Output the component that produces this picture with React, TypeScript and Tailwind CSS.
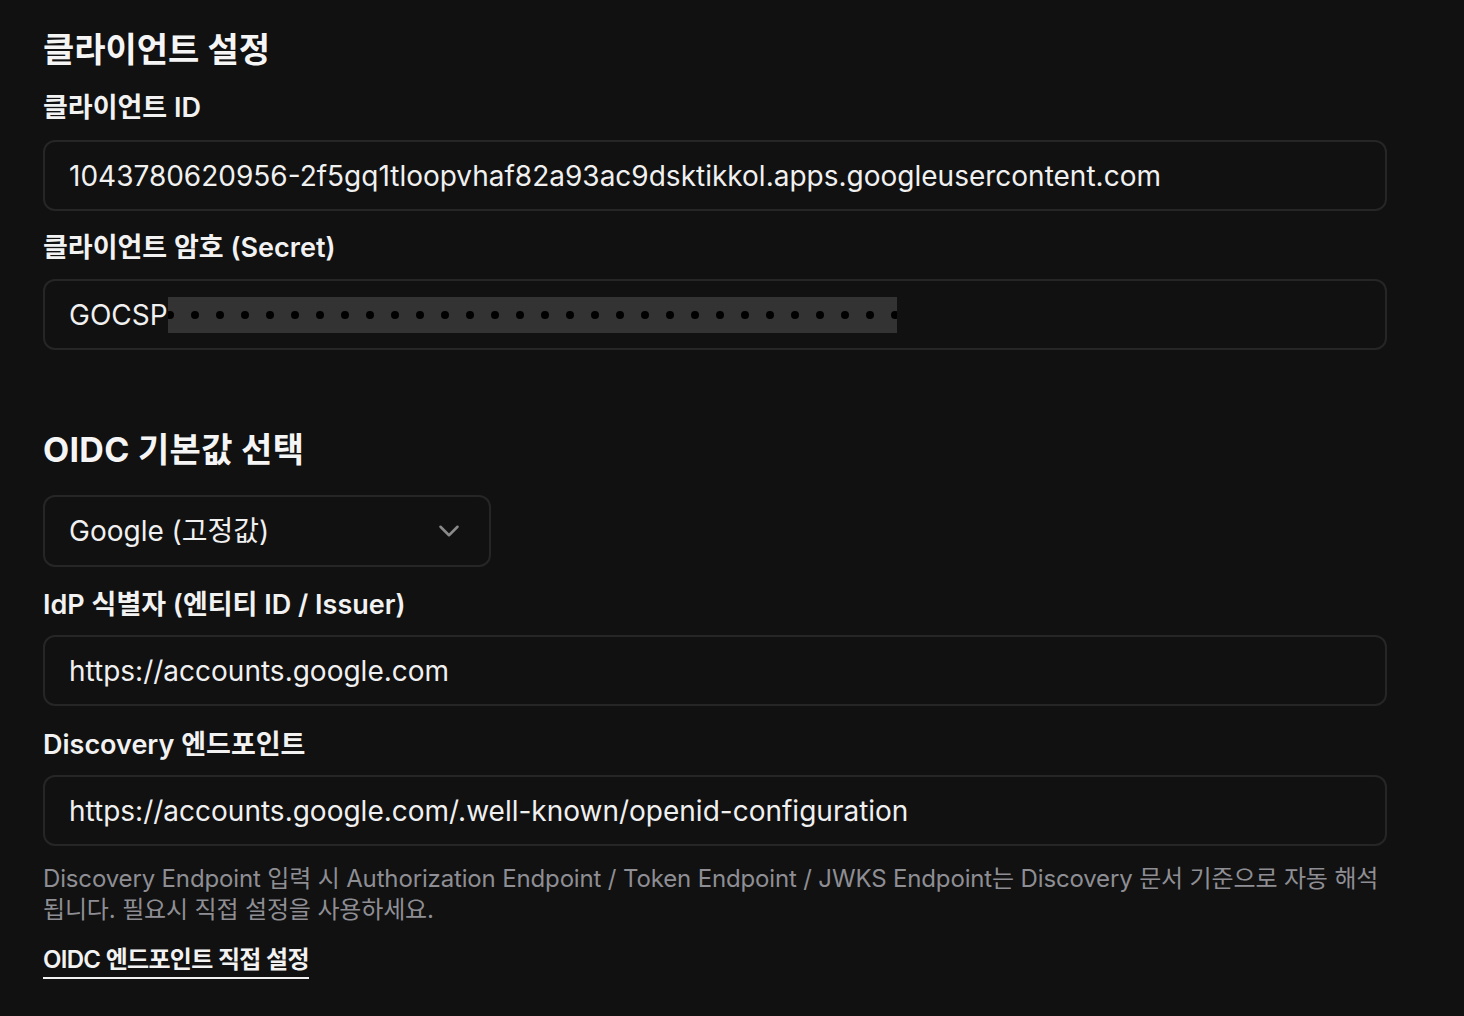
import { ChevronDown } from 'lucide-react';

const font = { fontFamily: 'Inter, "Noto Sans CJK KR", sans-serif' };

const Label = ({ children, className = '' }: { children: React.ReactNode; className?: string }) => (
  <div className={`text-[27px] leading-[36px] font-semibold text-[#f2f2f2] ${className}`}>{children}</div>
);

const Field = ({ value, className = '' }: { value: string; className?: string }) => (
  <div
    className={`w-[1344px] h-[71px] rounded-[12px] border-2 border-[#262626] flex items-center pl-[24px] text-[28px] text-[#f0f0f0] ${className}`}
  >
    {value}
  </div>
);

const SecretField = () => {
  const dots = Array.from({ length: 30 });
  return (
    <div className="w-[1344px] h-[71px] rounded-[12px] border-2 border-[#262626] flex items-center pl-[24px] text-[28px] text-[#f0f0f0] mt-[13px]">
      <span>GOCSP</span>
      <div className="w-[729px] h-[36px] bg-[#333333] overflow-hidden flex items-center">
        <div className="flex items-center gap-[17px] ml-[-2px]">
          {dots.map((_, i) => (
            <span key={i} className="block w-[8px] h-[8px] rounded-full bg-black shrink-0" />
          ))}
        </div>
      </div>
    </div>
  );
};

export default function App() {
  return (
    <div className="min-h-screen bg-[#111111] pl-[43px] pt-[30px]" style={font}>
      <h2 className="text-[34px] leading-[40px] font-bold text-[#f5f5f5]">클라이언트 설정</h2>

      <Label className="mt-[20px]">클라이언트 ID</Label>
      <Field className="mt-[14px]" value="1043780620956-2f5gq1tloopvhaf82a93ac9dsktikkol.apps.googleusercontent.com" />

      <Label className="mt-[19px]">클라이언트 암호 (Secret)</Label>
      <SecretField />

      <h2 className="mt-[80px] text-[34px] leading-[40px] font-bold text-[#f5f5f5] tracking-[0.3px]">OIDC 기본값 선택</h2>

      <div className="mt-[25px] w-[448px] h-[72px] rounded-[12px] border-2 border-[#262626] flex items-center justify-between pl-[24px] pr-[23px] text-[28px] text-[#f0f0f0]">
        <span>Google (고정값)</span>
        <ChevronDown size={34} strokeWidth={1.8} className="text-[#8a8a8a]" />
      </div>

      <Label className="mt-[20px]">IdP 식별자 (엔티티 ID / Issuer)</Label>
      <Field className="mt-[12px]" value="https://accounts.google.com" />

      <Label className="mt-[21px]">Discovery 엔드포인트</Label>
      <Field className="mt-[12px]" value="https://accounts.google.com/.well-known/openid-configuration" />

      <p className="mt-[17px] w-[1344px] text-[24px] leading-[31px] text-[#8e8e94] tracking-[-0.15px]">
        Discovery Endpoint 입력 시 Authorization Endpoint / Token Endpoint / JWKS Endpoint는 Discovery 문서 기준으로 자동 해석
        <br />
        됩니다. 필요시 직접 설정을 사용하세요.
      </p>

      <div className="mt-[18px]">
        <span className="inline-block text-[24px] leading-[34px] font-semibold text-[#f2f2f2] border-b-2 border-[#f2f2f2] tracking-[-0.7px]">
          OIDC 엔드포인트 직접 설정
        </span>
      </div>
    </div>
  );
}
